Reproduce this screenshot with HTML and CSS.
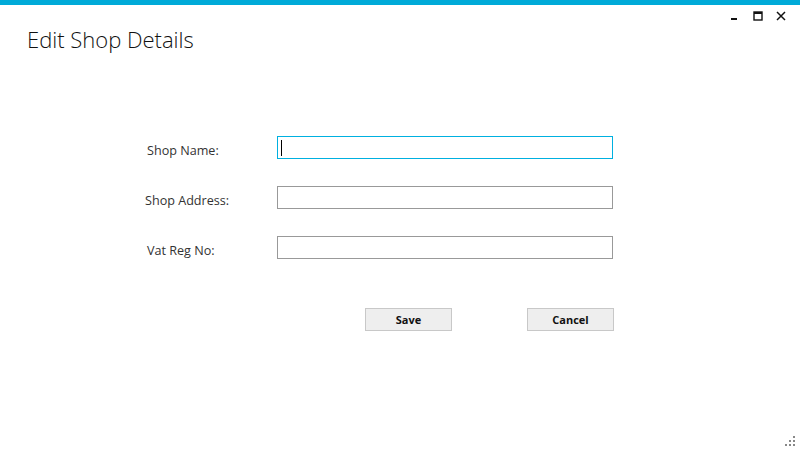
FILE: index.html
```html
<!DOCTYPE html>
<html>
<head>
<meta charset="utf-8">
<link rel="stylesheet" href="styles.css">
</head>
<body>
<div class="window">
  <div class="accent"></div>
  <div class="titlebar">
    <h1 class="title">Edit Shop Details</h1>
    <div class="controls">
      <svg class="ctl" width="10" height="10" viewBox="0 0 10 10"><rect x="1" y="7" width="6" height="2" fill="#111"/></svg>
      <svg class="ctl" width="10" height="10" viewBox="0 0 10 10"><rect x="1" y="1" width="8" height="8" fill="none" stroke="#111" stroke-width="1.4"/><rect x="1" y="1" width="8" height="2" fill="#111"/></svg>
      <svg class="ctl" width="10" height="10" viewBox="0 0 10 10"><path d="M1 1 L9 9 M9 1 L1 9" stroke="#111" stroke-width="1.5"/></svg>
    </div>
  </div>
  <div class="form">
    <div class="row">
      <label class="lbl">Shop Name:</label>
      <div class="field focused"><span class="caret"></span></div>
    </div>
    <div class="row">
      <label class="lbl lbl-wide">Shop Address:</label>
      <div class="field"></div>
    </div>
    <div class="row">
      <label class="lbl">Vat Reg No:</label>
      <div class="field"></div>
    </div>
    <div class="buttons">
      <button class="btn">Save</button>
      <button class="btn">Cancel</button>
    </div>
  </div>
  <svg class="grip" width="12" height="12" viewBox="0 0 12 12">
    <rect x="9" y="1" width="2" height="2" fill="#888"/>
    <rect x="5" y="5" width="2" height="2" fill="#888"/>
    <rect x="9" y="5" width="2" height="2" fill="#888"/>
    <rect x="1" y="9" width="2" height="2" fill="#888"/>
    <rect x="5" y="9" width="2" height="2" fill="#888"/>
    <rect x="9" y="9" width="2" height="2" fill="#888"/>
  </svg>
</div>
</body>
</html>
```
FILE: styles.css
```css
html, body {
  margin: 0;
  padding: 0;
  background: #fff;
}
.window {
  position: relative;
  width: 800px;
  height: 450px;
  font-family: "Open Sans", "Noto Sans", sans-serif;
  color: #222;
  overflow: hidden;
}
.accent {
  height: 5px;
  background: #00aad8;
}
.titlebar {
  display: flex;
  justify-content: space-between;
  align-items: flex-start;
}
.title {
  margin: 20px 0 0 27px;
  font-weight: 300;
  font-size: 22px;
  line-height: 28px;
  color: #111;
}
.controls {
  display: flex;
  gap: 13px;
  margin: 6px 14px 0 0;
}
.ctl {
  display: block;
}
.form {
  margin: 83px 0 0 147px;
  display: flex;
  flex-direction: column;
  gap: 27px;
}
.row {
  display: flex;
  align-items: flex-start;
  height: 23px;
}
.lbl {
  width: 130px;
  font-size: 12.6px;
  line-height: 17px;
  margin-top: 6px;
  color: #333;
}
.lbl-wide {
  margin-left: -2px;
  width: 132px;
}
.field {
  width: 334px;
  height: 21px;
  border: 1px solid #999;
  background: #fff;
  display: flex;
  align-items: center;
}
.field.focused {
  border-color: #00b0e0;
}
.caret {
  display: block;
  width: 1px;
  height: 16px;
  margin-left: 3px;
  background: #000;
}
.buttons {
  display: flex;
  gap: 75px;
  margin: 22px 0 0 218px;
}
.btn {
  width: 87px;
  height: 23px;
  border: 1px solid #c8c8c8;
  background: #eeeeee;
  font-family: "Open Sans", "Noto Sans", sans-serif;
  font-weight: 700;
  font-size: 11px;
  color: #111;
  padding: 0;
}
.grip {
  position: absolute;
  right: 4px;
  bottom: 3px;
}
```
